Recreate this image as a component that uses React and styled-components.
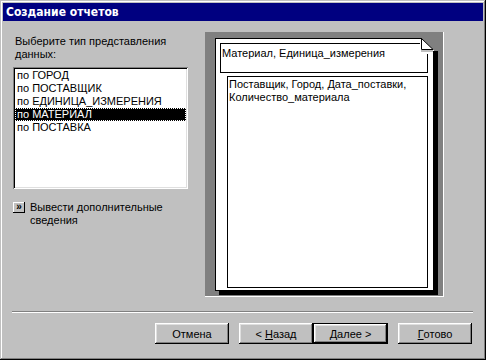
import React from 'react';
import styled, { createGlobalStyle } from 'styled-components';

const Global = createGlobalStyle`
  html, body { margin: 0; padding: 0; background: #c0c0c0; }
  body { font-family: "Liberation Sans", Arial, sans-serif; font-size: 11px; color: #000; }
  * { box-sizing: border-box; }
`;

const Window = styled.div`
  width: 486px;
  height: 360px;
  background: #c0c0c0;
  padding: 3px;
  display: flex;
  flex-direction: column;
  box-shadow: inset -1px -1px 0 #000, inset 1px 1px 0 #c0c0c0,
    inset -2px -2px 0 #808080, inset 2px 2px 0 #fff;
`;

const TitleBar = styled.div`
  height: 18px;
  background: #000080;
  color: #fff;
  font-family: "Liberation Sans Narrow", "DejaVu Sans Condensed", "Liberation Sans", sans-serif;
  font-weight: bold;
  font-size: 12px;
  display: flex;
  align-items: center;
  padding-left: 3px;
`;

const Main = styled.div`
  height: 290px;
  display: grid;
  grid-template-columns: 175px 239px;
  column-gap: 17px;
  padding-left: 10px;
  align-items: start;
`;

const LeftCol = styled.div`
  padding-top: 14px;
  display: flex;
  flex-direction: column;
`;

const Label = styled.div`
  line-height: 13px;
  padding-left: 2px;
  width: 160px;
`;

const ListBox = styled.div`
  margin-top: 6px;
  width: 175px;
  height: 122px;
  background: #fff;
  padding: 2px;
  box-shadow: inset 1px 1px 0 #808080, inset -1px -1px 0 #fff,
    inset 2px 2px 0 #000, inset -2px -2px 0 #dfdfdf;
`;

const Item = styled.div`
  height: 13px;
  line-height: 13px;
  padding-left: 2px;
  white-space: nowrap;
  background: ${p => (p.$selected ? '#000' : 'transparent')};
  color: ${p => (p.$selected ? '#fff' : '#000')};
  outline: ${p => (p.$selected ? '1px dotted #fff' : 'none')};
  outline-offset: -1px;
`;

const MoreRow = styled.div`
  margin-top: 12px;
  display: flex;
  align-items: flex-start;
  gap: 5px;
`;

const MoreButton = styled.div`
  margin-top: 1px;
  width: 12px;
  height: 11px;
  flex: none;
  background: #c0c0c0;
  font-weight: bold;
  font-size: 10px;
  line-height: 9px;
  text-align: center;
  box-shadow: inset -1px -1px 0 #000, inset 1px 1px 0 #fff;
`;

const MoreText = styled.div`
  line-height: 13px;
  width: 145px;
`;

const Panel = styled.div`
  margin-top: 11px;
  width: 239px;
  height: 265px;
  background: #808080;
  border-right: 1px solid #fff;
  border-bottom: 1px solid #fff;
  padding: 6px 0 0 10px;
`;

const Page = styled.div`
  position: relative;
  width: 219px;
  height: 253px;
  border: 1px solid #000;
  background: #fff;
  box-shadow: 4px 4px 0 #000;
  padding: 4px 0 0 4px;
  display: flex;
  flex-direction: column;
  align-items: flex-start;
`;

const DogEar = styled.svg`
  position: absolute;
  top: -1px;
  right: -5px;
  width: 18px;
  height: 16px;
  display: block;
`;

const HeaderBox = styled.div`
  width: 208px;
  height: 30px;
  border: 1px solid #000;
  padding: 3px 0 0 1px;
  line-height: 13px;
  white-space: nowrap;
`;

const DetailBox = styled.div`
  margin: 3px 0 0 7px;
  width: 201px;
  height: 212px;
  border: 1px solid #000;
  padding: 1px 0 0 1px;
  line-height: 13px;
  white-space: nowrap;
`;

const Separator = styled.div`
  margin: 0 10px 0 9px;
  border-top: 1px solid #808080;
  border-bottom: 1px solid #fff;
`;

const ButtonRow = styled.div`
  margin-top: 10px;
  display: flex;
  justify-content: flex-end;
  gap: 10px;
  padding-right: 11px;
`;

const Pair = styled.div`
  display: flex;
`;

const Button = styled.button`
  width: ${p => (p.$default ? 75 : 74)}px;
  height: 21px;
  margin: 0;
  padding: 0;
  font-family: "Liberation Sans", Arial, sans-serif;
  font-size: 11px;
  color: #000;
  background: #c0c0c0;
  border: ${p => (p.$default ? '1px solid #000' : 'none')};
  box-shadow: inset -1px -1px 0 #000, inset 1px 1px 0 #fff,
    inset -2px -2px 0 #808080, inset 2px 2px 0 #dfdfdf;
  display: flex;
  align-items: center;
  justify-content: center;
  u { text-decoration: underline; }
`;

const items = ['по ГОРОД', 'по ПОСТАВЩИК', 'по ЕДИНИЦА_ИЗМЕРЕНИЯ', 'по МАТЕРИАЛ', 'по ПОСТАВКА'];

export default function App() {
  return (
    <>
      <Global />
      <Window>
        <TitleBar>Создание отчетов</TitleBar>
        <Main>
          <LeftCol>
            <Label>Выберите тип представления данных:</Label>
            <ListBox>
              {items.map((t, i) => (
                <Item key={t} $selected={i === 3}>{t}</Item>
              ))}
            </ListBox>
            <MoreRow>
              <MoreButton>»</MoreButton>
              <MoreText>Вывести дополнительные сведения</MoreText>
            </MoreRow>
          </LeftCol>
          <Panel>
            <Page>
              <HeaderBox>Материал, Единица_измерения</HeaderBox>
              <DetailBox>
                Поставщик, Город, Дата_поставки,
                <br />
                Количество_материала
              </DetailBox>
              <DogEar viewBox="0 0 18 16" shapeRendering="crispEdges">
                <rect x="0" y="0" width="18" height="16" fill="#808080" />
                <polygon points="0,0 1.5,0 13.5,12 13.5,16 0,16" fill="#fff" />
                <rect x="0" y="0" width="2" height="1" fill="#000" />
                <rect x="13" y="13" width="5" height="3" fill="#000" />
                <rect x="1" y="12" width="12" height="2" fill="#c0c0c0" />
                <polygon points="1.5,0.5 1.5,11.5 13,11.5" fill="#fff" stroke="#000" strokeWidth="1" shapeRendering="auto" />
              </DogEar>
            </Page>
          </Panel>
        </Main>
        <Separator />
        <ButtonRow>
          <Button>Отмена</Button>
          <Pair>
            <Button>&lt;&nbsp;<u>Н</u>азад</Button>
            <Button $default><u>Д</u>алее&nbsp;&gt;</Button>
          </Pair>
          <Button><u>Г</u>отово</Button>
        </ButtonRow>
      </Window>
    </>
  );
}
